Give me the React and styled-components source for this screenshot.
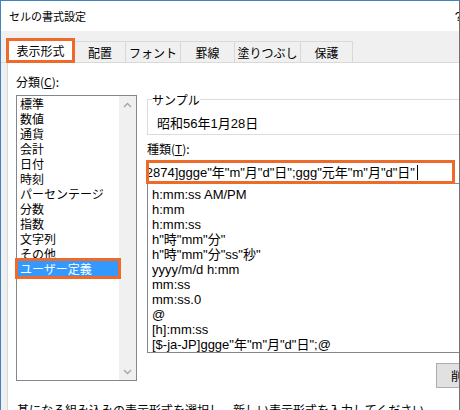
import React from "react";
import styled, { createGlobalStyle } from "styled-components";

const ORANGE = "#ee6a2a";

const GlobalStyle = createGlobalStyle`
  html, body {
    margin: 0;
    padding: 0;
    background: #ffffff;
    overflow: hidden;
  }
  body {
    font-family: "Liberation Sans", "Noto Sans CJK JP", sans-serif;
    font-size: 12px;
    color: #000;
  }
  * {
    box-sizing: border-box;
  }
`;

const Window = styled.div`
  width: 460px;
  height: 410px;
  display: flex;
  flex-direction: column;
  background: #f0f0f0;
  border-top: 1px solid #3f84c0;
  border-left: 1px solid #3f84c0;
  border-right: 1px solid #707070;
  overflow: hidden;
`;

const TitleBar = styled.div`
  height: 30px;
  flex-shrink: 0;
  display: flex;
  align-items: center;
  justify-content: space-between;
  padding-left: 8px;
  background: #ffffff;
`;

const Title = styled.span`
  font-family: "Noto Sans CJK JP", sans-serif;
  font-size: 11px;
  line-height: 15px;
`;

const Help = styled.span`
  font-size: 13px;
  margin-right: -3px;
`;

const TabRow = styled.div`
  height: 32px;
  flex-shrink: 0;
  display: flex;
  align-items: flex-end;
  padding-left: 5px;
  border-bottom: 1px solid #d9d9d9;
`;

const Tab = styled.div`
  width: ${(p) => p.$w}px;
  height: 21px;
  display: flex;
  align-items: center;
  justify-content: center;
  border-top: 1px solid #d9d9d9;
  border-right: 1px solid #d9d9d9;
  font-family: "Noto Sans CJK JP", sans-serif;
  font-size: 12px;
  line-height: 15px;
`;

const ActiveTab = styled(Tab)`
  height: 25px;
  margin-bottom: -1px;
  position: relative;
  z-index: 1;
  background: #ffffff;
  border: 3px solid ${ORANGE};
`;

const Panel = styled.div`
  flex: 1;
  margin-left: 6px;
  background: #ffffff;
  border-left: 1px solid #d9d9d9;
  padding: 11px 0 0 8px;
  display: flex;
  flex-direction: column;
`;

const Columns = styled.div`
  display: flex;
  gap: 10px;
  align-items: flex-start;
`;

const LeftCol = styled.div`
  width: 121px;
  flex-shrink: 0;
  display: flex;
  flex-direction: column;
  gap: 6px;
`;

const Label = styled.div`
  font-family: "Noto Sans CJK JP", sans-serif;
  font-size: 12px;
  line-height: 15px;
  white-space: nowrap;

  u {
    text-decoration: underline;
    text-underline-offset: 1px;
  }
`;

const ListBox = styled.div`
  height: 286px;
  border: 1px solid #828790;
  display: flex;
`;

const Items = styled.div`
  flex: 1;
  display: flex;
  flex-direction: column;
`;

const Item = styled.div`
  position: relative;
  height: 15px;
  line-height: 15px;
  padding-left: 3px;
  font-family: "Noto Sans CJK JP", sans-serif;
  font-size: 12px;
  white-space: nowrap;
  background: ${(p) => (p.$selected ? "#3399ff" : "transparent")};
  color: ${(p) => (p.$selected ? "#ffffff" : "#000")};

  ${(p) =>
    p.$selected &&
    `
    &::after {
      content: "";
      position: absolute;
      left: -2px;
      right: -2px;
      top: -3px;
      bottom: -3px;
      border: 3px solid ${ORANGE};
    }
  `}
`;

const ScrollBar = styled.div`
  width: 17px;
  flex-shrink: 0;
  background: #f0f0f0;
  display: flex;
  flex-direction: column;
  justify-content: space-between;
`;

const Arrow = styled.div`
  height: 17px;
  display: flex;
  align-items: center;
  justify-content: center;
`;

const RightCol = styled.div`
  width: 340px;
  flex-shrink: 0;
  display: flex;
  flex-direction: column;
  padding-top: 18px;
`;

const GroupBox = styled.fieldset`
  margin: 0;
  padding: 0 0 3px 4px;
  min-width: 0;
  border: 1px solid #dcdcdc;

  legend {
    padding: 0;
    font-family: "Noto Sans CJK JP", sans-serif;
    font-size: 12px;
    line-height: 15px;
  }
`;

const Sample = styled.div`
  margin-top: 9px;
  padding-left: 5px;
  font-size: 13px;
  line-height: 15px;
`;

const TypeLabel = styled(Label)`
  margin-top: 6px;
`;

const Input = styled.div`
  position: relative;
  z-index: 1;
  margin: 4px 0 0 -1px;
  width: 309px;
  height: 24px;
  border: 3px solid ${ORANGE};
  background: #ffffff;
  display: flex;
  align-items: center;
  justify-content: flex-end;
  padding-right: 34px;
  overflow: hidden;
  white-space: nowrap;
  font-size: 13px;
  line-height: 15px;
`;

const Caret = styled.span`
  display: inline-block;
  width: 1px;
  height: 15px;
  margin-left: 2px;
  background: #000;
  flex-shrink: 0;
`;

const FormatList = styled.div`
  margin-top: -1px;
  height: 170px;
  border: 1px solid #828790;
  padding: 3px 0 0 4px;
  display: flex;
  flex-direction: column;
`;

const Format = styled.div`
  height: 15px;
  line-height: 15px;
  font-size: 13px;
  white-space: nowrap;
`;

const Button = styled.button`
  margin: 10px 0 0 289px;
  width: 75px;
  height: 25px;
  padding: 0 0 0 14px;
  text-align: left;
  background: #e1e1e1;
  border: 1px solid #adadad;
  font-family: "Noto Sans CJK JP", sans-serif;
  font-size: 12px;
  color: #000;
`;

const Hint = styled.div`
  margin-top: 14px;
  padding-left: 1px;
  font-family: "Noto Sans CJK JP", sans-serif;
  font-size: 12px;
  line-height: 15px;
  white-space: nowrap;
`;

const Chevron = ({ up }) => (
  <svg width="9" height="6" viewBox="0 0 9 6">
    <path
      d={up ? "M1 5 L4.5 1.5 L8 5" : "M1 1 L4.5 4.5 L8 1"}
      fill="none"
      stroke="#a6a6a6"
      strokeWidth="1.4"
    />
  </svg>
);

const tabs = [
  { label: "配置", w: 51 },
  { label: "フォント", w: 55 },
  { label: "罫線", w: 54 },
  { label: "塗りつぶし", w: 66 },
  { label: "保護", w: 52 },
];

const categories = [
  "標準",
  "数値",
  "通貨",
  "会計",
  "日付",
  "時刻",
  "パーセンテージ",
  "分数",
  "指数",
  "文字列",
  "その他",
  "ユーザー定義",
];

const formats = [
  "h:mm:ss AM/PM",
  "h:mm",
  "h:mm:ss",
  'h"時"mm"分"',
  'h"時"mm"分"ss"秒"',
  "yyyy/m/d h:mm",
  "mm:ss",
  "mm:ss.0",
  "@",
  "[h]:mm:ss",
  '[$-ja-JP]ggge"年"m"月"d"日";@',
];

export default function App() {
  return (
    <>
      <GlobalStyle />
      <Window>
        <TitleBar>
          <Title>セルの書式設定</Title>
          <Help>?</Help>
        </TitleBar>
        <TabRow>
          <ActiveTab $w={69}>表示形式</ActiveTab>
          {tabs.map((t) => (
            <Tab key={t.label} $w={t.w}>
              {t.label}
            </Tab>
          ))}
        </TabRow>
        <Panel>
          <Columns>
            <LeftCol>
              <Label>
                分類(<u>C</u>):
              </Label>
              <ListBox>
                <Items>
                  {categories.map((c, i) => (
                    <Item key={c} $selected={i === categories.length - 1}>
                      {c}
                    </Item>
                  ))}
                </Items>
                <ScrollBar>
                  <Arrow>
                    <Chevron up />
                  </Arrow>
                  <Arrow>
                    <Chevron />
                  </Arrow>
                </ScrollBar>
              </ListBox>
            </LeftCol>
            <RightCol>
              <GroupBox>
                <legend>サンプル</legend>
                <Sample>昭和56年1月28日</Sample>
              </GroupBox>
              <TypeLabel>
                種類(<u>T</u>):
              </TypeLabel>
              <Input>
                <span>[$-ja-JP-x-gannen,2874]ggge"年"m"月"d"日";ggg"元年"m"月"d"日"</span>
                <Caret />
              </Input>
              <FormatList>
                {formats.map((f) => (
                  <Format key={f}>{f}</Format>
                ))}
              </FormatList>
              <Button>削除</Button>
            </RightCol>
          </Columns>
          <Hint>基になる組み込みの表示形式を選択し、新しい表示形式を入力してください。</Hint>
        </Panel>
      </Window>
    </>
  );
}
